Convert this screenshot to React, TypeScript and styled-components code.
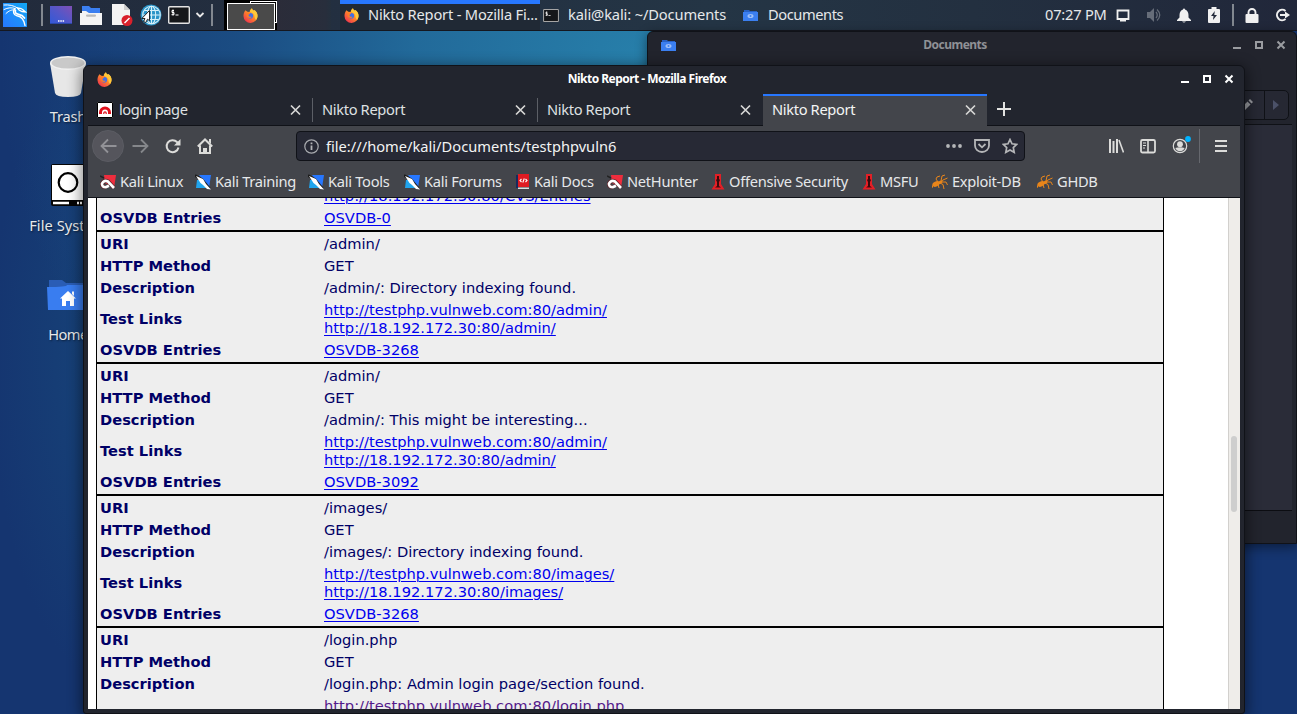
import React from 'react';
import styled, { createGlobalStyle } from 'styled-components';

const Global = createGlobalStyle`
  * { box-sizing: border-box; }
  html, body { margin: 0; padding: 0; overflow: hidden; }
  svg { display: block; flex: none; }
`;

const Desktop = styled.div`
  position: relative;
  width: 1297px;
  height: 714px;
  overflow: hidden;
  font: 14.67px/20px "Noto Sans", sans-serif;
  color: #e6e8ea;
  background:
    radial-gradient(ellipse 640px 560px at 640px 60px, #277faa 0%, #226a9a 35%, #1b4d83 62%, rgba(20, 52, 111, 0) 100%),
    radial-gradient(ellipse 130px 330px at 120px 360px, #17457a, rgba(20, 52, 111, 0)),
    #153570;
`;

const Label = styled.span<{ $ls?: number }>`
  white-space: nowrap;
  letter-spacing: ${p => p.$ls ?? -0.35}px;
  padding-bottom: 2px;
`;

/* ---------- top panel ---------- */
const Panel = styled.header`
  position: relative;
  display: flex;
  align-items: center;
  height: 31px;
  background: linear-gradient(90deg, #222b3c 0, #232f40 25%, #243545 55%, #233040 75%, #21273a 100%);
  border-bottom: 1px solid #15171f;
`;
const Slot = styled.div<{ $w: number; $gap?: number }>`
  display: flex;
  align-items: center;
  flex: none;
  width: ${p => p.$w}px;
  margin-left: ${p => p.$gap ?? 0}px;
`;
const PanelRule = styled.i<{ $gap: number }>`
  flex: none;
  width: 2px;
  height: 22px;
  margin-left: ${p => p.$gap}px;
  background: #828890;
`;
const Pager = styled.div`
  display: flex;
  flex: none;
  width: 53px;
  height: 30px;
  margin-left: 11px;
  background: #000;
`;
const PagerFront = styled.div`
  display: flex;
  align-items: center;
  justify-content: center;
  width: 48px;
  height: 27px;
  margin: 3px 0 0 3px;
  padding: 0 2px 2px 0;
  border: 1px solid #fff;
  background: #4a4a4a;
`;
const PagerBack = styled.div`
  width: 27px;
  height: 22px;
  margin-top: 1px;
  margin-left: -25px;
  border: 1px solid #fff;
  clip-path: polygon(0 0, 100% 0, 100% 100%, 24px 100%, 24px 2px, 0 2px);
`;
const PagerEmpty = styled.div`
  flex: none;
  width: 54px;
  height: 30px;
  background: linear-gradient(90deg, #2b2c39, #282e3c 90%, #24303e);
`;
const Task = styled.div<{ $w: number; $active?: boolean; $pad: number }>`
  display: flex;
  align-items: center;
  flex: none;
  width: ${p => p.$w}px;
  height: 30px;
  padding-left: ${p => p.$pad}px;
  margin-left: ${p => (p.$active ? 9 : 0)}px;
  background: ${p => (p.$active ? 'linear-gradient(#2777ff 4px, #202935 4px)' : 'none')};
`;

/* ---------- desktop icons ---------- */
const Shortcuts = styled.div`
  position: absolute;
  left: 19px;
  top: 55px;
  width: 98px;
  display: flex;
  flex-direction: column;
`;
const Shortcut = styled.div<{ $drop?: number }>`
  display: flex;
  flex-direction: column;
  align-items: center;
  justify-content: space-between;
  height: ${p => 73 - (p.$drop ?? 0)}px;
  margin-top: ${p => p.$drop ?? 0}px;
  margin-bottom: 36px;
  text-shadow: 1px 1px 2px #0008;
`;

/* ---------- windows ---------- */
const FileWindow = styled.section`
  position: absolute;
  left: 647px;
  top: 31px;
  width: 650px;
  height: 513px;
  display: flex;
  flex-direction: column;
  background: #22242d;
  border: 1px solid #101218;
  border-radius: 6px 6px 0 0;
  box-shadow: 0 3px 12px #0007;
  padding-right: 4px;
`;
const FileTitle = styled.div`
  display: flex;
  align-items: center;
  height: 26px;
  padding: 0 5px 0 13px;
  color: #8f9196;
  font-size: 12px;
  font-weight: 700;
`;
const FileTools = styled.div`
  display: flex;
  justify-content: flex-end;
  height: 67px;
  padding: 32px 3px 5px 0;
  border-bottom: 1px solid #0f1116;
`;
const PathBar = styled.div`
  display: flex;
  height: 30px;
  border: 1px solid #0f1116;
  border-radius: 5px;
  background: #262833;
`;
const PathCell = styled.div<{ $last?: boolean }>`
  display: flex;
  align-items: center;
  width: ${p => (p.$last ? 24 : 60)}px;
  padding-left: ${p => (p.$last ? 8 : 36)}px;
  border-left: 1px solid #0f1116;
`;
const FileBody = styled.div`
  height: 386px;
  background: #2a2c38;
  border-bottom: 1px solid #0c0d12;
`;

const Browser = styled.section`
  position: absolute;
  left: 83px;
  top: 65px;
  width: 1162px;
  height: 649px;
  display: flex;
  flex-direction: column;
  padding: 0 4px;
  background: #22252e;
  border: 1px solid #101218;
  border-radius: 6px 6px 3px 3px;
  box-shadow: 0 3px 14px 2px #0007;
`;
const TitleBar = styled.div`
  display: flex;
  align-items: center;
  height: 28px;
  padding: 0 5px 2px 9px;
  color: #fff;
  font-size: 12px;
  font-weight: 700;
`;
const TitleText = styled.div`
  flex: 1;
  display: flex;
  justify-content: center;
  padding: 2px 0 0 3px;
`;
const WindowButtons = styled.div`
  display: flex;
  gap: 10px;
`;
const Tabs = styled.div`
  display: flex;
  height: 32px;
  border-bottom: 1px solid #101218;
`;
const Tab = styled.div<{ $active?: boolean; $rule?: boolean }>`
  position: relative;
  display: flex;
  align-items: center;
  flex: none;
  width: ${p => (p.$active ? 224 : 225)}px;
  height: ${p => (p.$active ? 32 : 31)}px;
  padding: 0 ${p => (p.$active ? 10.5 : 11.5)}px 0 9px;
  color: ${p => (p.$active ? '#f4f5f5' : '#dfe1e3')};
  background: ${p => (p.$active ? 'linear-gradient(#2777ff 2px, #43454b 2px)' : 'none')};
  &::after {
    content: '';
    position: absolute;
    right: 0;
    top: 4px;
    width: 1px;
    height: 24px;
    background: ${p => (p.$rule ? '#5c5f66' : 'transparent')};
  }
`;
const TabName = styled.div`
  flex: 1;
  display: flex;
`;
const Favicon = styled.div`
  margin-right: 6px;
`;
const NewTab = styled.div`
  padding: 8px 0 0 10px;
`;
const NavBar = styled.div`
  display: flex;
  align-items: center;
  flex: none;
  height: 40px;
  background: #43454b;
`;
const BackButton = styled.div`
  display: flex;
  align-items: center;
  justify-content: center;
  width: 32px;
  height: 32px;
  margin-left: 4px;
  border: 1px solid #5b5c63;
  border-radius: 50%;
  background: #55555c;
`;
const UrlBar = styled.div`
  display: flex;
  align-items: center;
  width: 729px;
  height: 30px;
  margin-left: 83px;
  padding: 0 6px 0 7px;
  border: 1px solid #101218;
  border-radius: 4px;
  background: #272935;
`;
const UrlText = styled.div`
  flex: 1;
  display: flex;
  padding: 1px 0 0 7px;
  color: #f3f4f4;
`;
const UrlActions = styled.div`
  display: flex;
  gap: 12px;
`;
const NavRule = styled.i`
  width: 1px;
  height: 34px;
  margin: 0 13px 0 8px;
  background: #66686e;
`;
const Bookmarks = styled.div`
  display: flex;
  align-items: center;
  flex: none;
  height: 32px;
  padding: 1px 0 0 12px;
  background: #43454b;
  border-bottom: 1px solid #101218;
`;
const Bookmark = styled.div<{ $w: number }>`
  display: flex;
  align-items: center;
  flex: none;
  gap: 4px;
  width: ${p => p.$w}px;
`;
const Page = styled.div`
  display: flex;
  height: 511px;
  overflow: hidden;
  background: #fff;
`;
const Report = styled.main`
  flex: none;
  width: 1068px;
  height: 560px;
  margin: -12px 64px 0 8px;
  border: solid #000;
  border-width: 0 1px;
  background: #eee;
  color: #000066;
  font: 14.67px/18px "DejaVu Sans", sans-serif;
  letter-spacing: 0.01px;
`;
const Entry = styled.div<{ $first?: boolean }>`
  padding: ${p => (p.$first ? '0 3px 1px' : '1px 3px')};
  margin-top: ${p => (p.$first ? -1 : 0)}px;
  border-bottom: 2px solid #000;
`;
const Row = styled.div`
  display: grid;
  grid-template-columns: 224px 1fr;
  align-items: center;
  padding: 2px 0;
`;
const Key = styled.b`
  font-weight: 700;
`;
const Link = styled.a<{ $visited?: boolean }>`
  display: table;
  color: ${p => (p.$visited ? '#551a8b' : '#0000ee')};
  text-decoration: underline;
  text-decoration-thickness: 1px;
  text-underline-offset: 2px;
`;
const ScrollTrack = styled.div`
  flex: none;
  width: 12px;
  height: 511px;
  padding: 238px 0 0 2px;
  border-left: 1px solid #d2d0cd;
  background: #efedea;
`;
const ScrollThumb = styled.div`
  width: 6px;
  height: 76px;
  border-radius: 3px;
  background: #cecece;
`;

/* ---------- drawings ---------- */
const Firefox = ({ s = 15 }: { s?: number }) => (
  <svg width={s} height={s} viewBox="0 0 16 16">
    <defs>
      <linearGradient id="fx" x1="1" y1="0" x2=".2" y2="1">
        <stop offset="0" stopColor="#ffe14a" /><stop offset=".5" stopColor="#ff8a2a" /><stop offset="1" stopColor="#ee2f50" />
      </linearGradient>
    </defs>
    <path d="M2.500 2.500 4.700 4 7 4.200C7.300 2.500 8.200 1 9.600.2c.2 1.500 1 2 2.200 2.800l.4-.8c2 1.500 3.300 3.600 3.300 6.200A7.500 7.500 0 0 1 .5 8.600C.5 6 1.400 4.200 2.500 2.500Z" fill="url(#fx)" />
    <path d="M9.600.2c.2 1.500 1 2 2.200 2.800l.4-.8c2 1.500 3.300 3.600 3.300 6.200 0 1.500-.6 3-1.500 4.200-1.600-1-1.500-3-2-5C11.500 5.500 8.500 4.500 7.500 4c.3-1.500 1-3 2.100-3.800" fill="#ffc93a" />
    <circle cx="7.800" cy="8.300" r="3" fill="#3f70e8" />
    <path d="M3.500 5.500c1.800-1 3.200-.8 4.300.3-.5.8-2 .9-1.900 2.200.2 1.300 2 1.800 3.400 1.200-1 2-4.300 1.900-5.300-.3Z" fill="#ff7b25" />
  </svg>
);

const KaliMark = () => (
  <svg width="24" height="24" viewBox="0 0 24 24">
    <defs><linearGradient id="kl" x1="1" x2="0" y2="1"><stop stopColor="#12a8f5" /><stop offset="1" stopColor="#2777ff" /></linearGradient></defs>
    <path fill="url(#kl)" d="M0 0h24v24H0z" />
    <g fill="none" stroke="#fff" strokeLinecap="round">
      <path d="M1 2C6 1.500 11 2.500 14.500 5M1 6.500c4-2 8-2.200 11-1M3 10.500c3-3 6-4 9-3.600" strokeWidth="1" />
      <path d="M12 5.500c-2.500 3-1.500 6.500 2 7.300 4.500.8 7 3.200 8 9.700" strokeWidth="1.400" />
      <path d="M12.500 7.500c-1 2.500.8 3.500 3 3.800 2.500.4 4.500 1.500 6 3.700" strokeWidth="1.700" />
      <path d="m14.500 5 3.500.500 2 1.200 2.500 2.300-3.500-.5L16 7z" strokeWidth="1.300" />
    </g>
  </svg>
);
const DesktopIcon = () => (
  <svg width="22" height="18" viewBox="0 0 22 18">
    <defs><linearGradient id="dk" x1="0" y1="1" x2="1" y2="0"><stop stopColor="#3159d8" /><stop offset=".5" stopColor="#5357c9" /><stop offset="1" stopColor="#8050b5" /></linearGradient></defs>
    <path fill="url(#dk)" d="M0 0h22v18H0z" /><path fill="#2a47a7" d="M0 17h22v1H0z" />
    <path d="M8 15h1.500m.8 0h1.500m.8 0h1.500" stroke="#fff" strokeWidth="1.300" />
  </svg>
);
const Cabinet = () => (
  <svg width="22" height="21" viewBox="0 0 22 21">
    <path fill="#3b7ff0" d="M2 1h7l2 2h9v7H2z" /><path fill="#f4f4f4" d="M0 8h2V6h4l3 2h13v12H0z" />
    <path fill="#3b7ff0" d="M2 4h18v3.500H9L7 6H2z" /><rect x="6" y="9.500" width="10" height="2.300" rx="1.100" fill="#bbb" />
  </svg>
);
const Document = () => (
  <svg width="21" height="22" viewBox="0 0 21 22">
    <path fill="#f3f3f3" d="M0 0h12l6 6v15H0z" /><path fill="#cfcfcf" d="m12 0 6 6h-6z" />
    <circle cx="15" cy="16.500" r="5.500" fill="#d9202b" /><path d="m12.500 19 5-5" stroke="#fff" strokeWidth="1.500" />
  </svg>
);
const Globe = () => (
  <svg width="22" height="22" viewBox="0 0 22 22">
    <circle cx="11" cy="11" r="10.500" fill="#2a94c8" />
    <g fill="none" stroke="#d6f0fa" strokeWidth="1.100"><circle cx="11.500" cy="11" r="8.800" /><ellipse cx="11.500" cy="11" rx="4.200" ry="8.800" /><path d="M11.500 2v18M3 11h17M4.500 6.500h14M4.500 15.500h14" /></g>
    <path d="M9.500 6.500v10.200l-2-1.500-1.700 3.300-2.200-1 1.400-3H1.800z" fill="#fff" stroke="#111" strokeWidth=".9" />
  </svg>
);
const Terminal = ({ small }: { small?: boolean }) => (
  <svg width={small ? 16 : 22} height={small ? 13 : 18} viewBox="0 0 22 18">
    <rect x=".7" y=".7" width="20.600" height="16.600" rx="1" fill="#15171a" stroke={small ? '#a5a5a5' : '#e3e3e3'} strokeWidth="1.400" />
    <path d="M6 4.500H4v2h2v2.200H3.500M5 3.500v6M7.500 9h3" stroke="#fff" fill="none" strokeWidth="1" />
  </svg>
);
const FolderMini = () => (
  <svg width="15" height="11" viewBox="0 0 15 11">
    <path fill="#2861c4" d="M1 0h5l1 1h7v4H1z" /><path fill="#3b7ff0" d="M0 2h15v9H0z" />
    <ellipse cx="7.500" cy="6" rx="3" ry="2" fill="#9fc0f7" /><circle cx="7.500" cy="6" r="1" fill="#3b7ff0" />
  </svg>
);
const Chevron = () => <svg width="10" height="8" viewBox="0 0 10 8"><path d="m1.500 2 3.500 3.500L8.500 2" fill="none" stroke="#e8e8e8" strokeWidth="1.800" /></svg>;

const Monitor = () => <svg width="14" height="13" viewBox="0 0 14 13"><path d="M1.500 1.500h11v8.500h-11z" fill="none" stroke="#f0f0f0" strokeWidth="1.800" /><path d="M4 11h6v1.500H4z" fill="#f0f0f0" /></svg>;
const Volume = () => (
  <svg width="16" height="16" viewBox="0 0 16 16"><path d="M1 5h3l4-4v14l-4-4H1z" fill="#666d79" /><path d="M10 5q2.500 3 0 6M11 2.500q5.500 5.500 0 11" fill="none" stroke="#666d79" strokeWidth="1.200" /></svg>
);
const Bell = () => <svg width="14" height="15" viewBox="0 0 14 15"><path fill="#f0f0f0" d="M7 .5q1 0 1 1Q11.300 2.500 11.500 7v2.500L14 12v1H0v-1l2.500-2.500V7Q2.700 2.500 6 1.500q0-1 1-1M5 13.500h4Q7 15.500 5 13.500" /></svg>;
const Battery = () => <svg width="12" height="16" viewBox="0 0 12 16"><path fill="#f0f0f0" d="M3.500 0h5v2H11q1 0 1 1v12q0 1-1 1H1q-1 0-1-1V3q0-1 1-1h2.500z" /><path fill="#22293a" d="M6.800 4 3 9h2.500L5 13l4-5H6.300z" /></svg>;
const Lock = () => <svg width="14" height="15" viewBox="0 0 14 15"><rect y="6" x=".5" width="13" height="9" rx="1" fill="#f0f0f0" /><path d="M3.500 7V4.500a3.500 3.500 0 0 1 7 0V7" fill="none" stroke="#f0f0f0" strokeWidth="1.900" /></svg>;
const Logout = () => <svg width="15" height="14" viewBox="0 0 15 14"><path d="M10.500 3A5.200 5.200 0 1 0 10.500 11" fill="none" stroke="#f0f0f0" strokeWidth="2" /><path d="M5 7h6" stroke="#f0f0f0" strokeWidth="2" /><path d="m10 3.500 5 3.500-5 3.500z" fill="#f0f0f0" /></svg>;

const Trash = () => (
  <svg width="36" height="43" viewBox="0 0 36 43">
    <path d="m0 8 5 30q1 4 13 4t13-4l5-30z" fill="#e7e7e7" /><ellipse cx="18" cy="8" rx="18" ry="7" fill="#f1f1f1" /><ellipse cx="18" cy="8" rx="16.500" ry="5.500" fill="#c9c9c9" />
  </svg>
);
const Drive = () => (
  <svg width="34" height="42" viewBox="0 0 34 42">
    <rect width="34" height="42" rx="2" fill="#050505" /><rect x="1" y="1" width="32" height="35" fill="#fff" />
    <circle cx="17" cy="18.500" r="9.300" fill="none" stroke="#000" strokeWidth="2.200" /><path d="M2 39h16M26 39h2m1 0h2" stroke="#fff" strokeWidth="2.500" />
  </svg>
);
const HomeFolder = () => (
  <svg width="42" height="31" viewBox="0 0 42 31">
    <path fill="#2a5db5" d="M2 0h13l4 3h22v10H2z" /><path fill="#397df0" d="M0 7q20 0 20-2h22l-1 25H1z" />
    <path fill="#fff" d="m21 11 8 7.500h-2V26h-4v-5h-4v5h-4v-7.500h-2zM25 11.500h2V16l-2-2z" />
  </svg>
);

const WinIcons = ({ color }: { color: string }) => (
  <WindowButtons>
    <svg width="12" height="12" viewBox="0 0 12 12"><path d="M2 9h8" stroke={color} strokeWidth="2" /></svg>
    <svg width="12" height="12" viewBox="0 0 12 12"><path d="M3 3h6v6H3z" fill="none" stroke={color} strokeWidth="2" /></svg>
    <svg width="12" height="12" viewBox="0 0 12 12"><path d="m2.500 2.500 7 7m0-7-7 7" stroke={color} strokeWidth="2" /></svg>
  </WindowButtons>
);
const Close = () => <svg width="13" height="12" viewBox="0 0 13 12"><path d="m2 1.500 9 9m0-9-9 9" stroke="#d7d7d5" strokeWidth="1.700" /></svg>;
const AcunetixIcon = () => (
  <svg width="16" height="16" viewBox="0 0 16 16"><path fill="#fff" d="M0 0h16v16H0z" /><path d="M.5.5h15v15H.5z" fill="none" stroke="#000" /><path d="M3.500 12v-1.500a4.500 4.500 0 0 1 9 0V12" fill="none" stroke="#e0101c" strokeWidth="3" /><path d="M6.800 12v-1a1.200 1.200 0 0 1 2.400 0v1" stroke="#e0101c" strokeWidth="1.200" fill="none" /></svg>
);

type BookmarkKind = 'red' | 'blue' | 'book' | 'offsec' | 'bug';
const BookmarkIcon = ({ kind }: { kind: BookmarkKind }) => {
  if (kind === 'red') return (
    <svg width="16" height="16" viewBox="0 0 16 16"><path fill="#ee2d3d" d="M4 1h12l-2 13-9-5z" /><path d="m0 2 4 2" stroke="#222" strokeWidth="1.500" /><path d="M6 13.200Q1.500 13 2 9.500 4 5.500 8 7.500L14 14" fill="none" stroke="#5a2026" strokeWidth="4" /><path d="M6 13.200Q1.500 13 2 9.500 4 5.500 8 7.500L14 14M5.500 13.200l3.500-1.500" fill="none" stroke="#fff" strokeWidth="2.700" /></svg>
  );
  if (kind === 'blue') return (
    <svg width="16" height="16" viewBox="0 0 16 16"><path fill="#2777ff" d="M4 1h12l-2 13z" /><path fill="#20a4ed" d="M2 6h7l5 8H1z" /><path d="m0 1.500 7 4 7.500 9" stroke="#1b1b1b" strokeWidth="2.600" fill="none" /><path fill="#fff" d="M1 2 8 5l3 5 5 5.500-4-.5-4-4-2.500-2z" /></svg>
  );
  if (kind === 'book') return (
    <svg width="14" height="16" viewBox="0 0 14 16"><path fill="#172a5e" d="M0 1h3v13H0z" /><path fill="#e01b22" d="M2 0h11v13H2z" /><path fill="#ddd" d="M2 13.500h11V15H2z" /><path d="M5.500 5 4 6.500 5.500 8M9.500 5 11 6.500 9.500 8M8.300 4.500l-1.500 4" stroke="#fff" fill="none" strokeWidth="1.100" /></svg>
  );
  if (kind === 'offsec') return (
    <svg width="14" height="16" viewBox="0 0 14 16"><path fill="#e31f26" d="M4 0h6v10l3.500 5.500H.5L4 10z" /><path fill="#3a0a0c" d="M6 2h2v3l1 1-1 2v4l2 1.500H4L6 12V8L5 6l1-1z" /></svg>
  );
  return (
    <svg width="16" height="16" viewBox="0 0 16 16"><ellipse cx="4" cy="10" rx="3.800" ry="2.600" fill="#e8851a" transform="rotate(-25 4 10)" /><ellipse cx="8" cy="8.300" rx="2.500" ry="1.500" fill="#e8851a" transform="rotate(-25 8 8)" /><path d="M8 8l3-2 4.500-2M9 7l1-5 3-1M6 8 4 5l1-2 3-1M9 8l5 0 1.500 3M8 9l3 1.500L12 15M6 10l1 4M1 11l-1 3" stroke="#e8851a" strokeWidth="1" fill="none" /></svg>
  );
};

const bookmarks: { name: string; kind: BookmarkKind; w: number }[] = [
  { name: 'Kali Linux', kind: 'red', w: 95 },
  { name: 'Kali Training', kind: 'blue', w: 113 },
  { name: 'Kali Tools', kind: 'blue', w: 96 },
  { name: 'Kali Forums', kind: 'blue', w: 112 },
  { name: 'Kali Docs', kind: 'book', w: 91 },
  { name: 'NetHunter', kind: 'red', w: 104 },
  { name: 'Offensive Security', kind: 'offsec', w: 151 },
  { name: 'MSFU', kind: 'offsec', w: 70 },
  { name: 'Exploit-DB', kind: 'bug', w: 105 },
  { name: 'GHDB', kind: 'bug', w: 80 },
];

interface EntryData { uri: string; text: string; osvdb: string }
const entries: EntryData[] = [
  { uri: '/admin/', text: 'Directory indexing found.', osvdb: 'OSVDB-3268' },
  { uri: '/admin/', text: 'This might be interesting...', osvdb: 'OSVDB-3092' },
  { uri: '/images/', text: 'Directory indexing found.', osvdb: 'OSVDB-3268' },
];

const Field = ({ name, children }: { name: string; children: React.ReactNode }) => (
  <Row><Key>{name}</Key><div>{children}</div></Row>
);
const EntryHead = ({ uri, text }: { uri: string; text: string }) => (
  <>
    <Field name="URI">{uri}</Field>
    <Field name="HTTP Method">GET</Field>
    <Field name="Description">{uri}: {text}</Field>
  </>
);

export default function App() {
  return (
    <Desktop>
      <Global />
      <Panel>
        <Slot $w={24} $gap={3}><KaliMark /></Slot>
        <PanelRule $gap={14} />
        <Slot $w={22} $gap={7}><DesktopIcon /></Slot>
        <Slot $w={22} $gap={8}><Cabinet /></Slot>
        <Slot $w={21} $gap={10}><Document /></Slot>
        <Slot $w={22} $gap={7}><Globe /></Slot>
        <Slot $w={22} $gap={6}><Terminal /></Slot>
        <Slot $w={10} $gap={5}><Chevron /></Slot>
        <PanelRule $gap={6} />
        <Pager><PagerFront><Firefox /></PagerFront><PagerBack /></Pager>
        <PagerEmpty />
        <Task $w={200} $active $pad={4}><Slot $w={24}><Firefox /></Slot><Label $ls={-0.19}>Nikto Report - Mozilla Fi...</Label></Task>
        <Task $w={200} $pad={3}><Slot $w={25}><Terminal small /></Slot><Label $ls={-0.13}>kali@kali: ~/Documents</Label></Task>
        <Task $w={305} $pad={3}><Slot $w={25}><FolderMini /></Slot><Label $ls={-0.43}>Documents</Label></Task>
        <Slot $w={62}><Label $ls={-0.22}>07:27 PM</Label></Slot>
        <Slot $w={14} $gap={9}><Monitor /></Slot>
        <Slot $w={16} $gap={16}><Volume /></Slot>
        <Slot $w={14} $gap={15}><Bell /></Slot>
        <Slot $w={12} $gap={17}><Battery /></Slot>
        <PanelRule $gap={12} />
        <Slot $w={14} $gap={11}><Lock /></Slot>
        <Slot $w={15} $gap={16}><Logout /></Slot>
      </Panel>

      <Shortcuts>
        <Shortcut><Trash /><Label $ls={-0.2}>Trash</Label></Shortcut>
        <Shortcut><Drive /><Label $ls={0.05}>File System</Label></Shortcut>
        <Shortcut $drop={7}><HomeFolder /><Label $ls={-0.6}>Home</Label></Shortcut>
      </Shortcuts>

      <FileWindow>
        <FileTitle><FolderMini /><TitleText><Label $ls={-0.5}>Documents</Label></TitleText><WinIcons color="#9a9ca0" /></FileTitle>
        <FileTools>
          <PathBar>
            <PathCell><svg width="12" height="12" viewBox="0 0 12 12"><path fill="#989a9f" d="m0 9 6.500-6.500 3 3L3 12H0zM7.500 1.500 9 0l3 3-1.500 1.500z" /></svg></PathCell>
            <PathCell $last><svg width="7" height="10" viewBox="0 0 7 10"><path fill="#4b5168" d="m0 0 6 5-6 5z" /></svg></PathCell>
          </PathBar>
        </FileTools>
        <FileBody />
      </FileWindow>

      <Browser>
        <TitleBar><Firefox /><TitleText><Label $ls={-0.53}>Nikto Report - Mozilla Firefox</Label></TitleText><WinIcons color="#fff" /></TitleBar>
        <Tabs>
          <Tab $rule><Favicon><AcunetixIcon /></Favicon><TabName><Label $ls={-0.43}>login page</Label></TabName><Close /></Tab>
          <Tab $rule><TabName><Label>Nikto Report</Label></TabName><Close /></Tab>
          <Tab><TabName><Label>Nikto Report</Label></TabName><Close /></Tab>
          <Tab $active><TabName><Label>Nikto Report</Label></TabName><Close /></Tab>
          <NewTab><svg width="14" height="14" viewBox="0 0 14 14"><path d="M7 0v14M0 7h14" stroke="#e2e2e0" strokeWidth="2" /></svg></NewTab>
        </Tabs>
        <NavBar>
          <BackButton><svg width="17" height="16" viewBox="0 0 17 16"><path d="M8 1.500 1.500 8 8 14.500M2 8h14.500" stroke="#929297" fill="none" strokeWidth="1.800" /></svg></BackButton>
          <Slot $w={17} $gap={8}><svg width="17" height="16" viewBox="0 0 17 16"><path d="M9 1.500 15.500 8 9 14.500M15 8H.5" stroke="#85878b" fill="none" strokeWidth="1.800" /></svg></Slot>
          <Slot $w={16} $gap={16}><svg width="16" height="16" viewBox="0 0 16 16"><path d="M13.500 9.500A6 6 0 1 1 12 4l2 2" stroke="#dcdcda" fill="none" strokeWidth="2" /><path d="M15.500 1v6.500H9z" fill="#dcdcda" /></svg></Slot>
          <Slot $w={16} $gap={16}><svg width="16" height="16" viewBox="0 0 16 16"><path d="M.8 8.500 8 1.500l7.200 7M3 7.500V15h10V7.500" fill="none" stroke="#dcdcda" strokeWidth="2" /><path d="M6 15v-5h4v5zM12 1h2v5l-2-2z" fill="#dcdcda" /></svg></Slot>
          <UrlBar>
            <svg width="15" height="15" viewBox="0 0 15 15"><circle cx="7.500" cy="7.500" r="6.700" fill="none" stroke="#a9abaf" strokeWidth="1.200" /><path d="M7.500 6.500V11M7.500 3.500v1.700" stroke="#b3b5b8" strokeWidth="1.800" /></svg>
            <UrlText><Label $ls={0}>file:///home/kali/Documents/testphpvuln6</Label></UrlText>
            <UrlActions>
              <svg width="16" height="16" viewBox="0 0 16 16" fill="#b5b6b8"><circle cx="2" cy="8" r="1.900" /><circle cx="8" cy="8" r="1.900" /><circle cx="14" cy="8" r="1.900" /></svg>
              <svg width="16" height="16" viewBox="0 0 16 16" fill="none" stroke="#b5b6b8" strokeWidth="1.800"><path d="M1 2h14v5.500a7 6.500 0 0 1-14 0z" /><path d="M4.500 6 8 9.300 11.500 6" /></svg>
              <svg width="16" height="16" viewBox="0 0 16 16"><path d="m8 1.500 2 4.300 4.700.6-3.400 3.200.9 4.700L8 12l-4.200 2.300.9-4.700L1.300 6.400 6 5.800z" fill="none" stroke="#b5b6b8" strokeWidth="1.700" /></svg>
            </UrlActions>
          </UrlBar>
          <Slot $w={16} $gap={83}><svg width="16" height="16" viewBox="0 0 16 16"><path d="M2 1v14M5.500 3v12M9 1v14" stroke="#dcdcda" strokeWidth="2" /><path d="m11 2 4.500 12.500" stroke="#dcdcda" strokeWidth="1.600" /></svg></Slot>
          <Slot $w={16} $gap={16}><svg width="16" height="16" viewBox="0 0 16 16" fill="none" stroke="#dcdcda"><rect x="1" y="2" width="14" height="12.500" rx="1.500" strokeWidth="1.800" /><path d="M8 2v12" strokeWidth="1.600" /><path d="M3 5h3M3 7.500h3M3 10h2" /></svg></Slot>
          <Slot $w={20} $gap={15}><svg width="20" height="20" viewBox="0 0 20 20"><circle cx="9" cy="10" r="6.700" fill="none" stroke="#dcdcda" strokeWidth="1.200" /><circle cx="9" cy="8.200" r="2.900" fill="#dcdcda" /><path d="M4.300 12q4.700-1.500 9.400 0-1.700 3.200-4.700 3.200T4.300 12" fill="#dcdcda" /><circle cx="17" cy="3" r="2.900" fill="#00b3ff" /></svg></Slot>
          <NavRule />
          <svg width="16" height="14" viewBox="0 0 16 14"><path d="M2 2h12M2 7h12M2 12h12" stroke="#dcdcda" strokeWidth="2" /></svg>
        </NavBar>
        <Bookmarks>
          {bookmarks.map(b => <Bookmark key={b.name} $w={b.w}><BookmarkIcon kind={b.kind} /><Label $ls={-0.29}>{b.name}</Label></Bookmark>)}
        </Bookmarks>
        <Page>
          <Report>
            <Entry $first>
              <Field name=""><Link>http://18.192.172.30:80/CVS/Entries</Link></Field>
              <Field name="OSVDB Entries"><Link>OSVDB-0</Link></Field>
            </Entry>
            {entries.map((e, i) => (
              <Entry key={i}>
                <EntryHead uri={e.uri} text={e.text} />
                <Field name="Test Links"><Link>http://testphp.vulnweb.com:80{e.uri}</Link><Link>http://18.192.172.30:80{e.uri}</Link></Field>
                <Field name="OSVDB Entries"><Link>{e.osvdb}</Link></Field>
              </Entry>
            ))}
            <Entry>
              <EntryHead uri="/login.php" text="Admin login page/section found." />
              <Field name=""><Link $visited>http://testphp.vulnweb.com:80/login.php</Link></Field>
            </Entry>
          </Report>
          <ScrollTrack><ScrollThumb /></ScrollTrack>
        </Page>
      </Browser>
    </Desktop>
  );
}
